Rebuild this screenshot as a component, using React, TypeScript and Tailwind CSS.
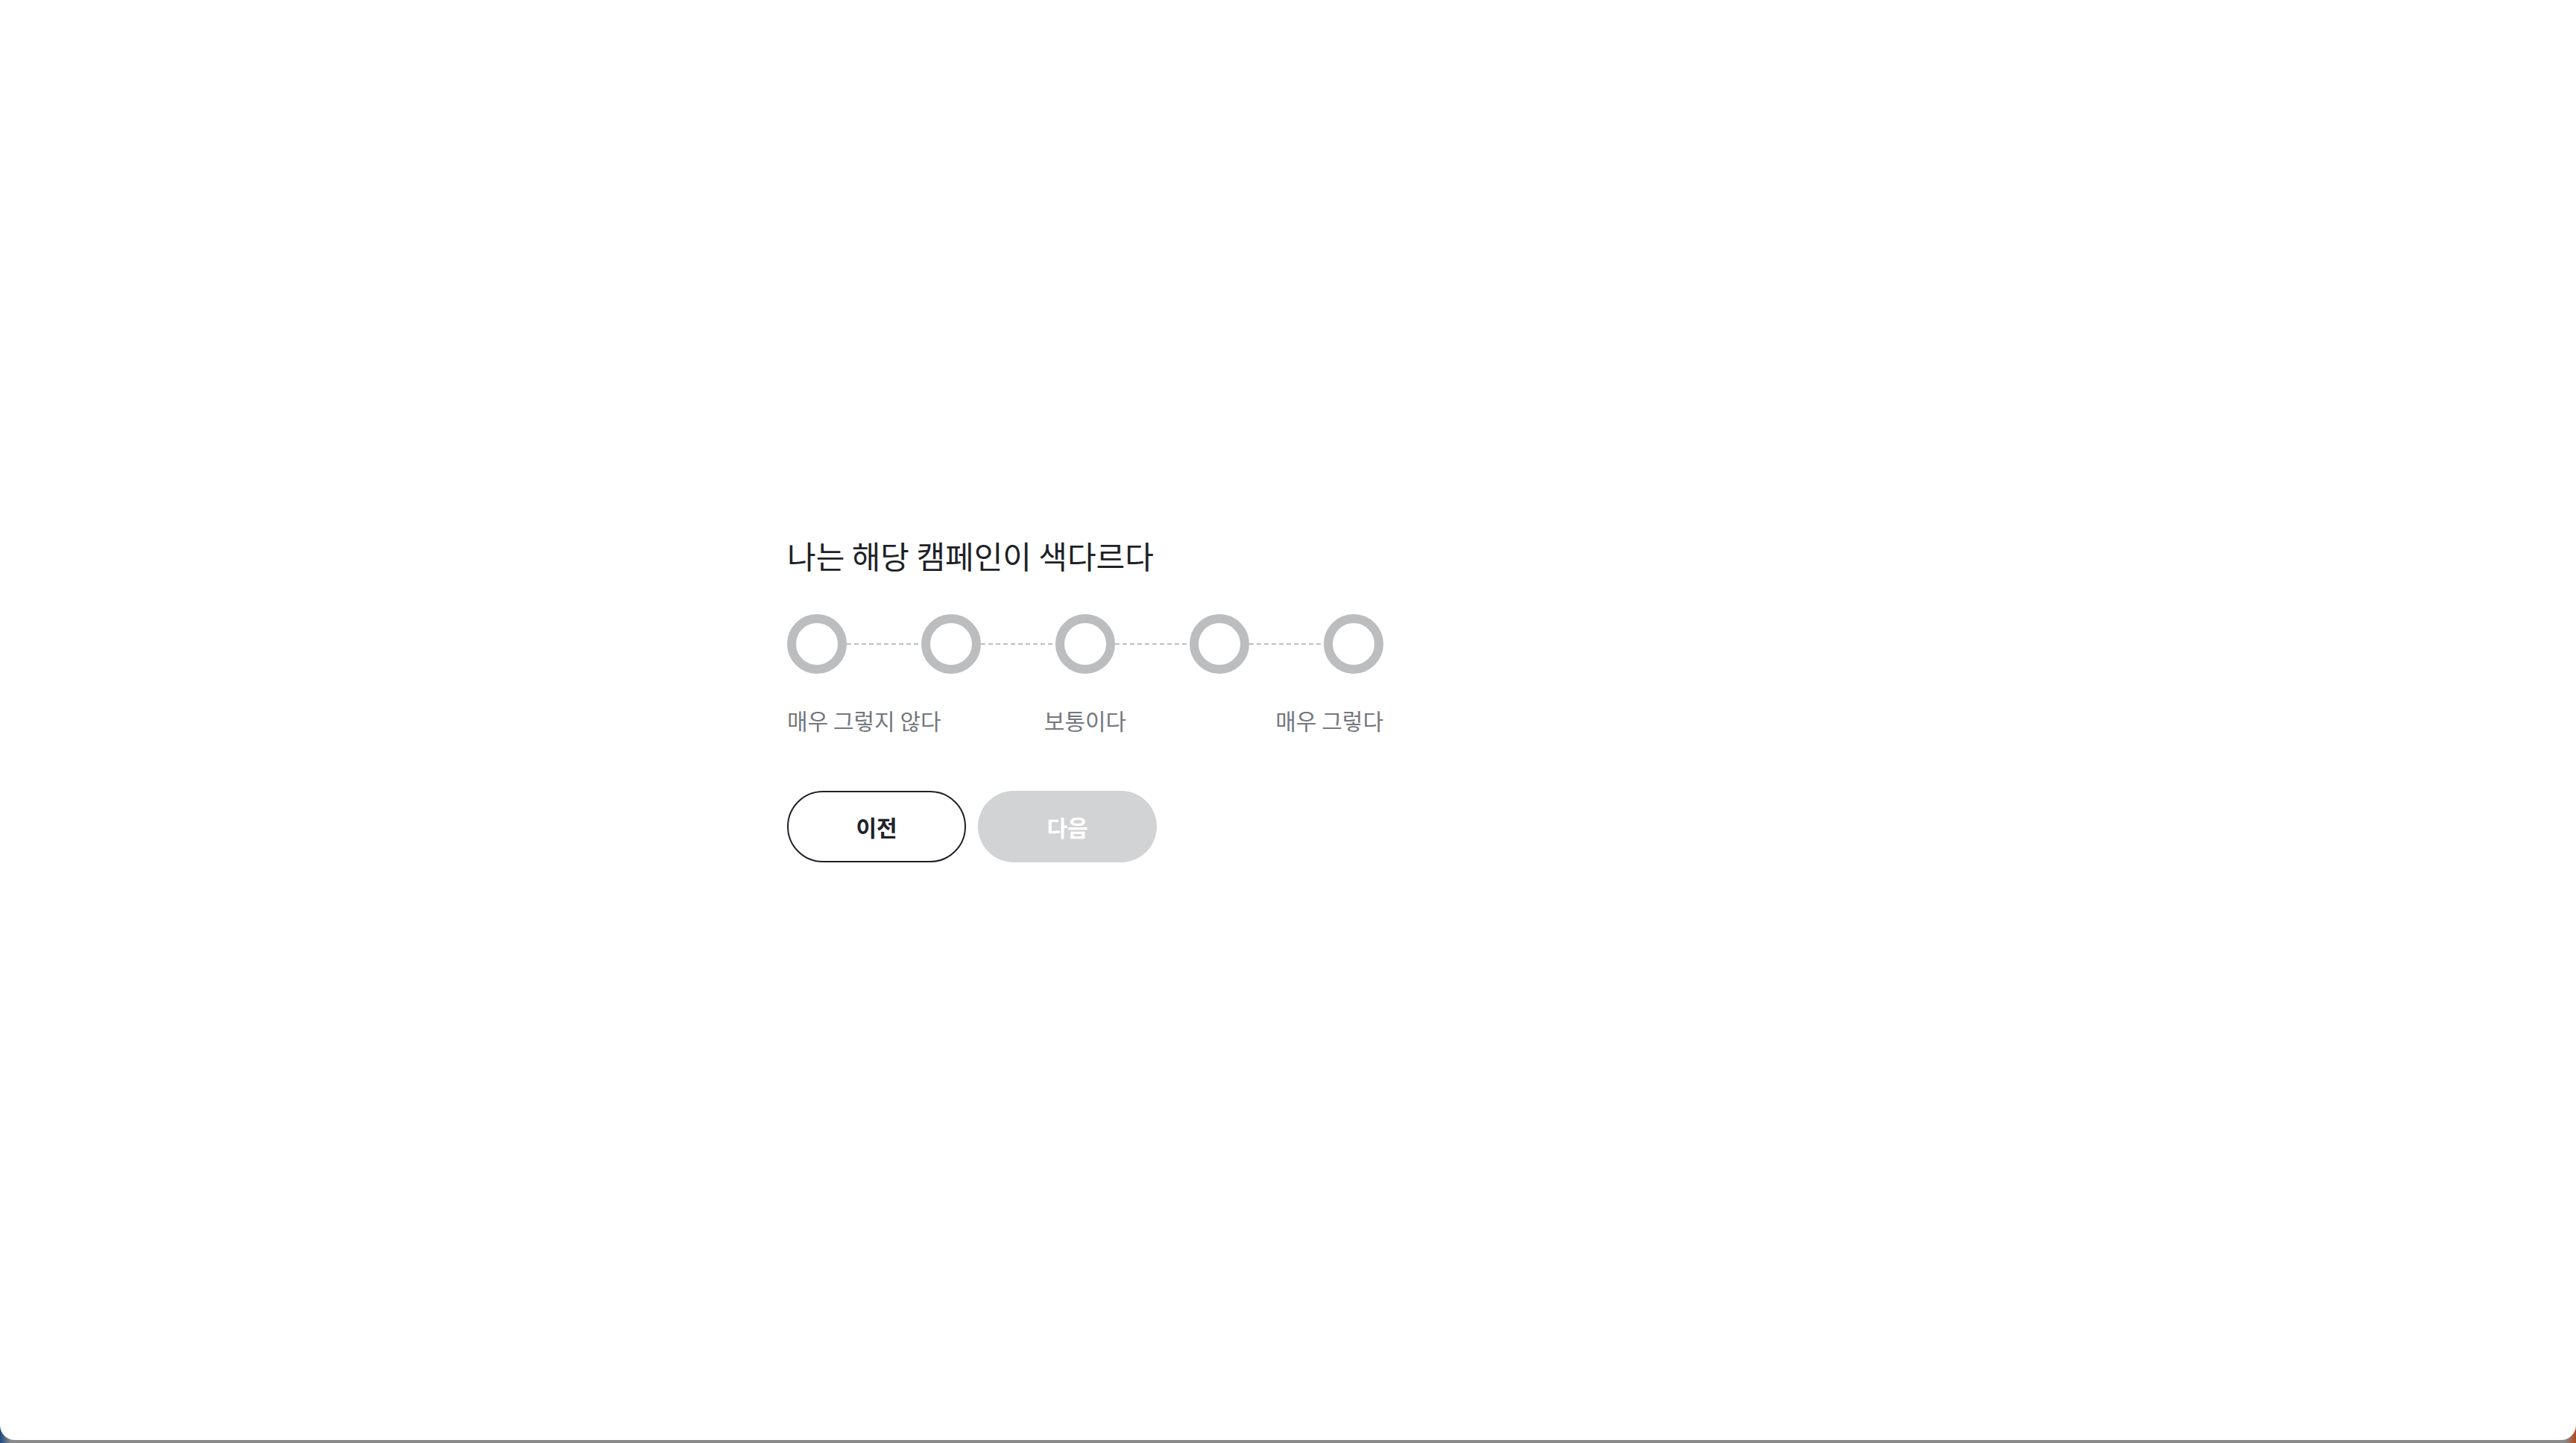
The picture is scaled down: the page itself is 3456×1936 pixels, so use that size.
import React from "react";

const font = { fontFamily: '"Noto Sans CJK KR", "Noto Sans", sans-serif' };

function Dash() {
  return (
    <div className="h-[2px] flex-1 bg-[repeating-linear-gradient(90deg,#bfc0c2_0px,#bfc0c2_6px,transparent_6px,transparent_10px)]" />
  );
}

function Circle() {
  return (
    <button className="h-[80px] w-[80px] shrink-0 rounded-full border-[12px] border-[#bcbdbf] bg-white" />
  );
}

export default function App() {
  return (
    <div className="h-[1936px] w-full bg-[linear-gradient(90deg,#1d4a82_0px,#8a8a8a_14px,#8a8a8a_calc(100%-14px),#b5481c_100%)]" style={font}>
      <div className="flex h-[1932px] w-full items-center justify-center rounded-b-[20px] bg-white">
        <div className="mb-[58px] w-[1344px]">
          <h1 className="text-[42px] leading-[56px] font-normal text-[#1e2228]">나는 해당 캠페인이 색다르다</h1>
          <div className="mt-[51px] w-[800px]">
            <div className="flex items-center">
              <Circle />
              <Dash />
              <Circle />
              <Dash />
              <Circle />
              <Dash />
              <Circle />
              <Dash />
              <Circle />
            </div>
            <div className="mt-[42px] flex text-[30px] leading-[40px] text-[#74777d]">
              <span className="flex-1 text-left">매우 그렇지 않다</span>
              <span>보통이다</span>
              <span className="flex-1 text-right">매우 그렇다</span>
            </div>
          </div>
          <div className="mt-[75px] flex gap-[16px]">
            <button className="h-[96px] w-[240px] rounded-full border-2 border-[#1e2228] bg-white text-[30px] font-bold text-[#1e2228]">
              이전
            </button>
            <button className="h-[96px] w-[240px] rounded-full bg-[#d2d3d5] text-[30px] font-bold text-white">
              다음
            </button>
          </div>
        </div>
      </div>
    </div>
  );
}
